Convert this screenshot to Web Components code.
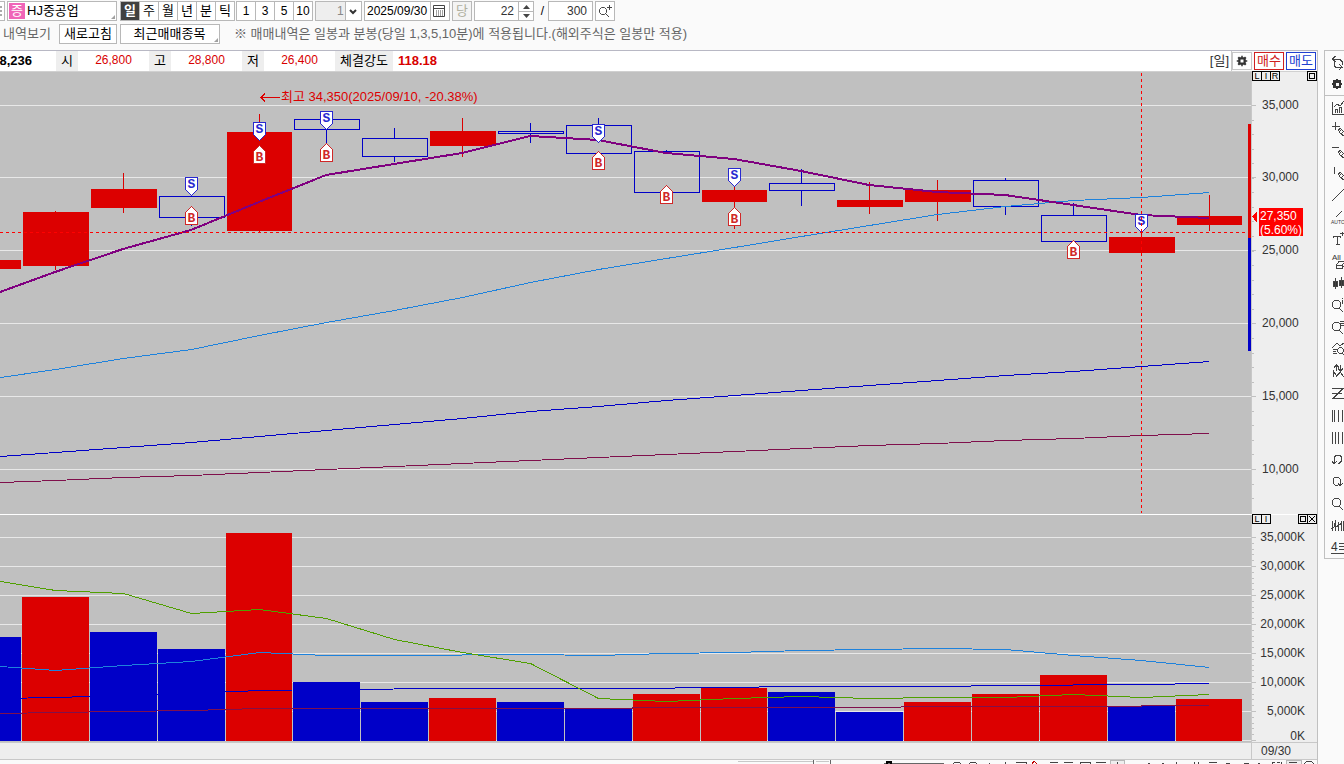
<!DOCTYPE html>
<html lang="ko">
<head>
<meta charset="utf-8">
<title>HJ중공업</title>
<style>
  body {
    margin: 0;
    height: 100vh;
    overflow: hidden;
    background: #fafafa;
    color: #000;
    font: 12px/18px "Liberation Sans", "Noto Sans CJK KR", sans-serif;
  }
</style>
</head>
<body>
<stock-app></stock-app>

<script>
const BASE = `
  * { box-sizing: border-box; }
  button, input, select {
    font: inherit;
    color: inherit;
    margin: 0;
    padding: 0;
    border: 1px solid #b8b8b8;
    border-radius: 0;
    background: #fff;
    height: 20px;
    line-height: 16px;
  }
  svg { display: block; }
`

// base class, every element writes its own template()
class BaseElement extends HTMLElement {
  constructor () {
    super()
    this.shadowDOM = this.attachShadow({ mode: 'open' })
  }

  connectedCallback () {
    this.shadowDOM.innerHTML = `<style>${BASE}</style>${this.template()}`
  }
}

class ButtonGroup extends BaseElement {
  template () {
    const items = this.getAttribute('items').split(',')
    const active = this.getAttribute('active')
    return `
      <style>
        :host { display: flex; border: 1px solid #b8b8b8; background: #fff; height: 20px; }
        button { width: 19px; height: 18px; border: 0; border-left: 1px solid #b8b8b8; text-align: center; }
        button:first-of-type { width: 18px; border-left: 0; }
        .on { background: #404040; color: #fff; font-weight: bold; }
        :host([korean]) { font-size: 13px; }
      </style>
      ${items.map(t => `<button class="${t === active ? 'on' : ''}">${t}</button>`).join('')}
    `
  }
}
customElements.define('button-group', ButtonGroup)

class ChartToolbar extends BaseElement {
  template () {
    return `
      <style>
        :host { display: block; height: 50px; padding-top: 1px; }
        .row { display: flex; align-items: center; gap: 2px; height: 20px; white-space: nowrap; }
        .second { margin-top: 3px; gap: 3px; font-size: 13px; color: #666; }
        .second button { color: #000; }
        .box { display: flex; height: 20px; border: 1px solid #b8b8b8; background: #fff; }
        .box > * { border: 0; height: 18px; }
        .menu { width: 5px; border-left: 0; }
        .code { position: relative; width: 110px; padding: 1px; font-size: 13px; }
        .code b { width: 16px; height: 16px; background: #f064b8; color: #fff; line-height: 16px; text-align: center; font-weight: normal; }
        .code input { width: 86px; height: 16px; padding-left: 2px; }
        .corner::after {
          content: ""; position: absolute; right: 1px; bottom: 1px;
          border: 2px solid transparent; border-right-color: #a0a0a0; border-bottom-color: #a0a0a0;
        }
        .corner { position: relative; }
        .periods { margin-left: 1px; }
        .minutes { margin-left: -1px; }
        .pick { position: relative; width: 47px; }
        .pick select { appearance: none; width: 100%; padding-left: 21px; background: linear-gradient(90deg, #eee 29px, #b8b8b8 29px 30px, #fff 30px); color: #888; }
        .pick svg { position: absolute; right: 4px; top: 7px; pointer-events: none; }
        .date { width: 86px; }
        .date input { width: 65px; padding-left: 2px; }
        .date button { width: 19px; border-left: 1px solid #b8b8b8; padding: 2px; }
        .today { width: 20px; color: #b0b0a0; background: #f4f4f4; font-size: 13px; }
        .spin { width: 60px; }
        .spin input { width: 43px; padding-right: 4px; text-align: right; color: #333; }
        .spin div { display: flex; flex-direction: column; width: 15px; border-left: 1px solid #b8b8b8; }
        .spin button { height: 9px; border: 0; display: flex; align-items: center; justify-content: center; }
        .spin button:last-child { border-top: 1px solid #b8b8b8; }
        .slash { width: 10px; text-align: right; padding-right: 2px; }
        .total { width: 45px; text-align: right; padding-right: 5px; color: #333; }
        .zoom { width: 20px; padding: 1px; }
        .menu svg { margin-top: 4px; }
        .label { width: 56px; padding-left: 3px; }
        .refresh { width: 58px; }
        .recent { width: 100px; padding-right: 1px; }
        .note { padding-left: 11px; }
      </style>
      <div class="row">
        <div class="box menu"><svg width="3" height="10"><path d="M0 1h2M0 5h2M0 9h2" stroke="#555"/></svg></div>
        <div class="box code corner"><b>증</b><input value="HJ중공업" aria-label="종목"></div>
        <button-group class="periods" korean items="일,주,월,년,분,틱" active="일"></button-group>
        <button-group class="minutes" items="1,3,5,10"></button-group>
        <div class="box pick"><select aria-label="주기"><option>1</option></select>
          <svg width="8" height="6"><path d="M1 1l3 3 3-3" fill="none" stroke="#333" stroke-width="2"/></svg></div>
        <div class="box date"><input value="2025/09/30" aria-label="날짜"><button aria-label="달력">
          <svg width="13" height="13" fill="none" stroke="#444"><path d="M.5 .5h11v11h-11zM1 3.5h10"/><path d="M3 6h7M3 8h7M3 10h7" stroke-dasharray="1 1"/></svg></button></div>
        <button class="today">당</button>
        <div class="box spin"><input value="22" aria-label="개수"><div>
          <button aria-label="증가"><svg width="7" height="4"><path d="M0 4L3.500 0 7 4z" fill="#444"/></svg></button>
          <button aria-label="감소"><svg width="7" height="4"><path d="M0 0L3.500 4 7 0z" fill="#444"/></svg></button></div></div>
        <span class="slash">/</span>
        <input class="total" value="300" aria-label="전체">
        <button class="zoom" aria-label="확대"><svg width="16" height="16" fill="none" stroke="#444"><path d="M4.500 4.500h3l2 2v3l-2 2h-3l-2-2v-3zM9 11l3 3M12.500 2v5M10 4.500h5"/></svg></button>
      </div>
      <div class="row second">
        <span class="label">내역보기</span>
        <button class="refresh">새로고침</button>
        <button class="recent corner">최근매매종목</button>
        <span class="note">※ 매매내역은 일봉과 분봉(당일 1,3,5,10분)에 적용됩니다.(해외주식은 일봉만 적용)</span>
      </div>
    `
  }
}
customElements.define('chart-toolbar', ChartToolbar)

const GEAR = '<path d="M7 1h2v2h2l1-1 2 2-1 1v2h2v2h-2v2l1 1-2 2-1-1h-2v2h-2v-2h-2l-1 1-2-2 1-1v-2h-2v-2h2v-2l-1-1 2-2 1 1h2zM6 6v4h4V6z" fill="#333" fill-rule="evenodd" stroke="none"/>'

class QuoteBar extends BaseElement {
  template () {
    return `
      <style>
        :host {
          display: flex; height: 22px; align-items: stretch; line-height: 19px;
          background: #fff; border-top: 1px solid #b8b8c4; border-bottom: 1px solid #d0d0d0;
          white-space: nowrap; overflow: hidden;
        }
        .volume { width: 56px; padding-right: 24px; display: flex; justify-content: flex-end; font-weight: bold; font-size: 13px; }
        .name { width: 22px; background: #eee; text-align: center; font-size: 13px; }
        .name.wide { width: 58px; }
        .value { width: 71px; text-align: center; color: #d80000; }
        .power { flex: 1; padding-left: 5px; color: #d80000; font-weight: bold; font-size: 13px; }
        .unit { padding-right: 2px; color: #333; font-size: 13px; }
        .actions { display: flex; gap: 2px; width: 86px; padding-top: 1px; border-left: 1px solid #c8c8c8; background: #fafafa; }
        .actions button { width: 30px; height: 18px; font-size: 13px; }
        .actions .gear { width: 20px; padding: 0 3px; border-color: #c8c8c8; }
        .buy { color: #d02020; border-color: #d02020; }
        .sell { color: #2040d0; border-color: #2040d0; }
      </style>
      <span class="volume">8,236</span>
      <span class="name">시</span><span class="value">26,800</span>
      <span class="name">고</span><span class="value">28,800</span>
      <span class="name">저</span><span class="value">26,400</span>
      <span class="name wide">체결강도</span><span class="power">118.18</span>
      <span class="unit">[일]</span>
      <div class="actions">
        <button class="gear" aria-label="설정"><svg width="12" height="12" viewBox="0 0 16 16">${GEAR}</svg></button>
        <button class="buy">매수</button>
        <button class="sell">매도</button>
      </div>
    `
  }
}
customElements.define('quote-bar', QuoteBar)

const RED = '#dc0000'
const BLUE = '#0000c8'
const SKY = '#1e82dc'
const WINE = '#80104c'

// x, width, top, bottom, high, low, rising
const CANDLES = [
  [-45, 66, 260, 269, 260, 269, 1],
  [23, 66, 212, 266, 211, 270, 1],
  [91, 66, 189, 208, 173, 213, 1],
  [159, 66, 196, 218, 196, 226, 0],
  [227, 65, 132, 231, 114, 232, 1],
  [294, 66, 119, 130, 119, 144, 0],
  [362, 66, 138, 157, 128, 162, 0],
  [430, 66, 131, 146, 118, 157, 1],
  [498, 66, 131, 134, 123, 143, 0],
  [566, 66, 125, 154, 118, 154, 0],
  [634, 66, 151, 193, 150, 193, 0],
  [702, 65, 190, 202, 186, 229, 1],
  [769, 66, 183, 191, 169, 206, 0],
  [837, 66, 200, 207, 182, 214, 1],
  [905, 66, 190, 202, 180, 221, 1],
  [973, 66, 180, 207, 178, 215, 0],
  [1041, 66, 215, 242, 203, 242, 0],
  [1109, 66, 237, 253, 232, 253, 1],
  [1177, 65, 216, 225, 195, 231, 1]
]

const VOLUMES = [
  [637, 0], [597, 1], [632, 0], [649, 0], [533, 1], [682, 0], [702, 0], [698, 1], [702, 0], [709, 0],
  [694, 1], [688, 1], [692, 0], [712, 0], [702, 1], [694, 1], [675, 1], [706, 0], [699, 1]
]

const SELLS = [[191, 177], [259, 122], [326, 111], [598, 124], [734, 168], [1141, 214]]
const BUYS = [[191, 206], [259, 145], [326, 143], [598, 151], [666, 185], [734, 207], [1073, 240]]

// thin lines go through pixel centres, or flat parts drop out
const line = (points, color, width = 1) =>
  `<polyline points="${points}" fill="none" stroke="${color}" stroke-width="${width}"${width === 1 ? ' transform="translate(0.5 0.5)"' : ''}/>`

const grid = rows => rows.map(y => `<rect y="${y}" width="1251" height="1" fill="#e8e8e8"/>`).join('')

const candle = ([x, w, top, bottom, high, low, up]) => {
  const cx = x + 32
  if (up) {
    return `<rect x="${cx}" y="${high}" width="1" height="${low - high}" fill="${RED}"/>
      <rect x="${x}" y="${top}" width="${w}" height="${bottom - top}" fill="${RED}"/>`
  }
  return `<rect x="${cx}" y="${high}" width="1" height="${top - high}" fill="${BLUE}"/>
    <rect x="${cx}" y="${bottom}" width="1" height="${low - bottom}" fill="${BLUE}"/>
    <rect x="${x + 0.5}" y="${top + 0.5}" width="${w - 1}" height="${bottom - top - 1}" fill="none" stroke="${BLUE}"/>`
}

const sellMark = ([x, y]) => `
  <path d="M${x - 5.5} ${y + 0.5}h12v12l-6 6-6-6z" fill="#fff" stroke="#2828d0"/>
  <text x="${x + 0.5}" y="${y + 11}" fill="#2828d0">S</text>`

const buyMark = ([x, y]) => `
  <path d="M${x - 5.5} ${y + 18.5}h12v-12l-6-6-6 6z" fill="#fff" stroke="#d02828"/>
  <text x="${x + 0.5}" y="${y + 16}" fill="#d02828">B</text>`

const PANE = `
  :host { display: grid; grid-template-columns: minmax(0, 1fr) 66px; background: #eee; }
  .plot { width: 100%; background: #c0c0c0; }
  text { font: 12px "Liberation Sans", "Noto Sans CJK KR", sans-serif; }
  .peak { font-size: 13px; }
  .marks text { font: bold 13px "Liberation Mono", monospace; text-anchor: middle; }
  .axis { border-left: 1px solid #c8c8c8; overflow: visible; }
  .axis text { fill: #333; }
  .axis .flag { fill: #fff; }
  .axis .box { font-size: 9px; text-anchor: middle; fill: #000; }
`

// small framed letter at the top of an axis
const boxes = (list, y) => list.map(([x, t]) => `
  <rect x="${x + 0.5}" y="${y + 0.5}" width="9" height="9" fill="#eee" stroke="#000"/>
  ${t === 'o' ? `<rect x="${x + 2.5}" y="${y + 2.5}" width="5" height="5" fill="none" stroke="#000"/>` : ''}
  ${t === 'x' ? `<path d="M${x + 2} ${y + 2}l6 6m0-6l-6 6" stroke="#000"/>` : ''}
  ${/[A-Z]/.test(t) ? `<text class="box" x="${x + 5}" y="${y + 8}">${t}</text>` : ''}`).join('')

class PriceChart extends BaseElement {
  template () {
    const rows = [105, 177, 250, 323, 396, 469]
    const prices = ['35,000', '30,000', '25,000', '20,000', '15,000', '10,000']
    let minor = ''
    for (let i = 1; i < 28; i++) {
      minor += `<rect y="${Math.round(105 + i * 14.56)}" width="2" height="1" fill="#c0c0c0"/>`
    }
    return `
      <style>${PANE}</style>
      <svg class="plot" viewBox="0 72 1251 442" preserveAspectRatio="xMaxYMin slice" shape-rendering="crispEdges">
        ${grid(rows)}
        ${CANDLES.map(candle).join('')}
        ${line('0,482 55,480 123,477 191,475 259,472 326,469 394,466 462,463 530,460 598,457 666,454 734,451 801,448 869,445 937,443 1005,440 1073,438 1141,435 1209,433', WINE)}
        ${line('0,456 55,452 123,447 191,442 259,436 326,430 394,424 462,418 530,411 598,406 666,400 734,395 801,390 869,385 937,380 1005,375 1073,371 1141,366 1209,361', BLUE)}
        ${line('0,377 55,369 123,358 191,349 259,335 326,322 394,310 462,297 530,282 598,269 666,258 734,247 801,236 869,225 937,214 1005,206 1073,200 1141,197 1209,192', SKY)}
        ${line('0,292 55,272 123,249 191,230 259,202 326,175 394,164 462,153 530,136 598,140 666,153 734,159 801,171 869,185 937,192 1005,195 1073,205 1141,215 1209,218', '#800080', 2)}
        <g class="marks">${SELLS.map(sellMark).join('')}${BUYS.map(buyMark).join('')}</g>
        <path d="M0 232.500H1248M1141.500 73V513" stroke="#f00" stroke-dasharray="3 3"/>
        <path d="M280 97.500h-19m4-4l-4 4 4 4" stroke="${RED}" fill="none"/>
        <text class="peak" x="281" y="101" fill="${RED}">최고 34,350(2025/09/10, -20.38%)</text>
        <rect x="1248" y="124" width="3" height="114" fill="${RED}"/>
        <rect x="1248" y="238" width="3" height="113" fill="${BLUE}"/>
      </svg>
      <svg class="axis" width="66" height="442" viewBox="0 72 65 442" shape-rendering="crispEdges">
        ${minor}
        ${rows.map((y, i) => `<rect y="${y}" width="4" height="1" fill="#c0c0c0"/><text x="10" y="${y + 4}">${prices[i]}</text>`).join('')}
        ${boxes([[0, 'L'], [9, 'I'], [18, 'R'], [55, 'o']], 71)}
        <path d="M0 216.500l5-5v11z" fill="#f00"/>
        <rect x="7" y="208" width="44" height="28" fill="#f00"/>
        <text class="flag" x="8" y="220">27,350</text>
        <text class="flag" x="8" y="234">(5.60%)</text>
      </svg>
    `
  }
}
customElements.define('price-chart', PriceChart)

class VolumeChart extends BaseElement {
  template () {
    const rows = [537, 566, 595, 624, 653, 682, 711]
    const names = ['35,000K', '30,000K', '25,000K', '20,000K', '15,000K', '10,000K', '5,000K']
    let minor = ''
    for (let i = 0; i < 36; i++) {
      minor += `<rect y="${Math.round(537 + i * 5.8)}" width="2" height="1" fill="#c0c0c0"/>`
    }
    return `
      <style>${PANE}
        :host { border-top: 1px solid #fff; border-bottom: 1px solid #c8c8c8; }
        .axis text { text-anchor: end; }
        .axis .box { text-anchor: middle; }
      </style>
      <svg class="plot" viewBox="0 515 1251 227" preserveAspectRatio="xMaxYMin slice" shape-rendering="crispEdges">
        ${grid(rows)}
        <rect y="740" width="1251" height="1" fill="#e8e8e8"/>
        ${VOLUMES.map(([top, up], i) => `<rect x="${CANDLES[i][0] - 1}" y="${top}" width="${CANDLES[i][1] + 1}" height="${741 - top}" fill="${up ? RED : BLUE}"/>`).join('')}
        ${line('0,713 55,712 123,711 191,710 259,708 530,708 734,707 1073,706 1209,705', WINE)}
        ${line('0,698 55,697 123,695 191,693 259,690 326,689 462,688 530,688 632,688 801,686 937,686 1005,685 1141,684 1209,683', BLUE)}
        ${line('0,666 55,670 123,665 191,661 259,652 326,655 394,655 530,654 598,655 666,653 734,652 801,650 937,648 1005,649 1073,655 1141,660 1209,667', SKY)}
        ${line('0,581 55,590 123,593 191,613 259,609 326,618 394,639 462,652 530,663 598,698 666,701 734,698 801,696 869,698 937,697 1005,697 1073,694 1141,697 1209,694', '#50a000')}
      </svg>
      <svg class="axis" width="66" height="227" viewBox="0 515 65 227" shape-rendering="crispEdges">
        ${minor}
        ${rows.map((y, i) => `<rect y="${y}" width="4" height="1" fill="#c0c0c0"/><text x="53" y="${y + 4}">${names[i]}</text>`).join('')}
        <rect y="740" width="4" height="1" fill="#c0c0c0"/>
        <text x="53" y="740">0K</text>
        ${boxes([[0, 'L'], [9, 'I'], [46, 'o'], [55, 'x']], 514)}
      </svg>
    `
  }
}
customElements.define('volume-chart', VolumeChart)

class DateAxis extends BaseElement {
  template () {
    return `
      <style>
        :host { display: grid; grid-template-columns: minmax(0, 1fr) 66px; height: 17px; background: #eee; border-bottom: 1px solid #c8c8c8; line-height: 17px; color: #333; }
        time { border-left: 1px solid #c8c8c8; padding-left: 9px; }
      </style>
      <span></span><time>09/30</time>
    `
  }
}
customElements.define('date-axis', DateAxis)

// scroll bar and drawing strip, only its upper edge fits in the window
class BottomStrip extends BaseElement {
  template () {
    return `
      <style>
        :host { display: block; height: 4px; overflow: hidden; }
        svg { width: 100%; }
      </style>
      <svg viewBox="0 760 1317 12" preserveAspectRatio="xMaxYMin slice" fill="none" stroke="#444" shape-rendering="crispEdges">
        <path d="M738 761.500h63M816 761.500h13" stroke="#c8c8c8"/>
        <path d="M738 761.500h75" stroke="#c8c8c8"/>
        <path d="M813.500 760v12M830.500 760v12" stroke="#666"/>
        <path d="M884 763.500h60" stroke="#666"/>
        <rect x="887" y="762" width="4" height="8" stroke="#000" stroke-width="2"/>
        <circle cx="957" cy="766" r="4"/><circle cx="973" cy="766" r="4"/>
        <path d="M989 764v-1M1005 764v-2M1016 762h10v5M1050 762.500h8M1064 762.500h9M1080 762.500h10v8h-10zM1096 762.500h10"/>
        <path d="M1032 764l2-3 4 4" stroke="#c00000"/>
        <rect x="1110" y="760" width="14" height="12" fill="#eee" stroke="#b8b8b8"/>
        <path d="M1117 762v4M1148 763h2M1162 763h2M1176 762v3M1194 762v3M1198 762v3M1209 762.500h8M1226 763h4M1244 763h5M1258 763h2M1272 762h3M1272 762v5M1280 762h-3M1281 762v5"/>
        <rect x="1286" y="760" width="15" height="12" fill="#eee" stroke="#b8b8b8"/>
        <path d="M1289 762.500h8"/><circle cx="1309" cy="766" r="5"/>
      </svg>
    `
  }
}
customElements.define('bottom-strip', BottomStrip)

const PENCIL = '<path d="M7.500 7.500l2-1 6 6-2 2-5-4zM8 10l2-2M10 12l3-3"/>'
const LENS = '<path d="M3.500 2.500h4l2 2v4l-2 2h-4l-2-2v-4zM8 10l4 4"/>'

const TOOLS = [
  ['새로고침', '<path d="M4.500 1l-3 3 3 3M2 4.500h7l2 2v3M3.500 7v4l1 1h7M8 9l3 3-3 3"/>'],
  ['설정', `<svg width="12" height="14" viewBox="0 0 16 16">${GEAR}</svg>`],
  ['지표', '<path d="M1.500 2v12h11M3 7l3-3 3 2 4-5M4.500 13V9h2v4M8.500 13V7h2v6"/>'],
  ['추가', '<path d="M4.500 0v8M1 4.500h8"/>' + PENCIL],
  ['수평선', '<path d="M1 3.500h7"/>' + PENCIL],
  ['수직선', '<path d="M3.500 1v7"/>' + PENCIL],
  ['추세선', '<path d="M1 13L13 1"/>'],
  ['자동', '<path d="M5 7l6-6"/><text class="tiny" x="0" y="14">AUTO</text>'],
  ['문자', '<path d="M2.500 6V4.500h7V6M6.500 5v8M5 12.500h4M9 1.500h5M11.500 0v4"/>'],
  ['전체삭제', '<text x="1" y="6">All</text><path d="M5.500 11l3-4h6l-3 4zM5.500 11v3h6v-3M12 13l3-3V7"/>'],
  ['봉차트', '<path d="M2 5h4v5H2zM8 4h4v5H8z" fill="#333"/><path d="M4.500 2v11M10.500 1v11"/>'],
  ['정보', LENS + '<path d="M11.500 0v1M11.500 2v4"/>'],
  ['목록', LENS + '<path d="M9 1.500h5M9 3.500h5M10 5.500h4"/>'],
  ['패턴', '<path d="M1 6l5-5 3 3 4-3M2 7.500h4M2 9.500h3M2 11.500h4M8.500 5.500h2l2 2v2l-2 2h-2l-2-2v-2zM11 11l3 3"/>'],
  ['전환', '<path d="M5.500 1v6M3 3.500L5.500 1 8 3.500M9.500 1v6M7 4.500L9.500 7 12 4.500M2.500 13V7l3 5 4-4 3 5"/>'],
  ['지그재그', '<path d="M1 2.500h11L2 12.500h11M1 7.500h10"/>'],
  ['간격', '<path d="M1.500 2v12M3.500 2v12M7.500 2v12M11.500 2v12"/>'],
  ['등간격', '<path d="M1.500 2v12M4.500 2v12M7.500 2v12M11.500 2v12"/>'],
  ['실행취소', '<path d="M3.500 9V5l2-2h3l2 2v4l-2 2h-2M3.500 7v5M1 9l2 3 3-3"/>'],
  ['다시실행', '<path d="M7 11H4L2 9V5l2-2h3l2 2v6M7 9l2 3 3-3"/>'],
  ['확대', LENS],
  ['밀도', '<path d="M1.500 3v10M0 11l3-2 2-7M4.500 3v10M7.500 4v9M5 9l6-4M10.500 3v10M12.500 3v10"/>'],
  ['배열', '<text class="four" x="0" y="11">4</text><path d="M8 3.500h6M8 6.500h6M8 9.500h6M0 13.500h14"/>']
]

class ToolRail extends BaseElement {
  template () {
    return `
      <style>
        :host { display: flex; flex-direction: column; flex: 0 0 20px; align-self: flex-start; overflow: hidden; border: 1px solid #c0c0c0; border-right: 0; background: #fafafa; }
        button { display: block; flex: none; width: 30px; height: 22px; padding: 4px 6px; border: 0; background: none; }
        button:nth-of-type(2) { height: 23px; border-bottom: 1px solid #c0c0c0; }
        svg { overflow: visible; }
        text { font: 8px "Liberation Sans", sans-serif; fill: #333; stroke: none; }
        .tiny { font-size: 5px; }
        .four { font-size: 12px; }
      </style>
      ${TOOLS.map(([name, art]) => `<button aria-label="${name}"><svg width="16" height="15" fill="none" stroke="#444" shape-rendering="crispEdges">${art}</svg></button>`).join('')}
    `
  }
}
customElements.define('tool-rail', ToolRail)

class StockApp extends BaseElement {
  template () {
    return `
      <style>
        :host { display: block; }
        .body { display: flex; gap: 6px; }
        .chart { flex: 1; min-width: 0; border-right: 1px solid #c0c0c0; }
      </style>
      <chart-toolbar></chart-toolbar>
      <div class="body">
        <main class="chart">
          <quote-bar></quote-bar>
          <price-chart></price-chart>
          <volume-chart></volume-chart>
          <date-axis></date-axis>
          <bottom-strip></bottom-strip>
        </main>
        <tool-rail></tool-rail>
      </div>
    `
  }
}
customElements.define('stock-app', StockApp)
</script>
</body>
</html>
